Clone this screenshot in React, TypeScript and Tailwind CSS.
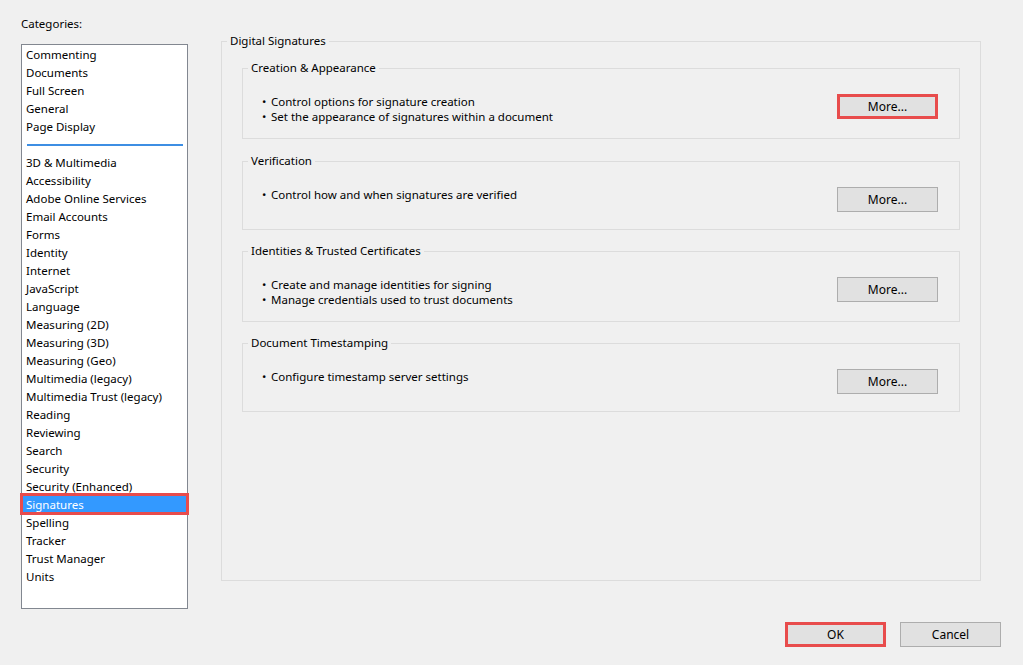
import React from 'react';

const CATEGORIES_TOP = ['Commenting', 'Documents', 'Full Screen', 'General', 'Page Display'];

const CATEGORIES = [
  '3D & Multimedia',
  'Accessibility',
  'Adobe Online Services',
  'Email Accounts',
  'Forms',
  'Identity',
  'Internet',
  'JavaScript',
  'Language',
  'Measuring (2D)',
  'Measuring (3D)',
  'Measuring (Geo)',
  'Multimedia (legacy)',
  'Multimedia Trust (legacy)',
  'Reading',
  'Reviewing',
  'Search',
  'Security',
  'Security (Enhanced)',
  'Signatures',
  'Spelling',
  'Tracker',
  'Trust Manager',
  'Units',
];

const SECTIONS = [
  {
    title: 'Creation & Appearance',
    lines: ['Control options for signature creation', 'Set the appearance of signatures within a document'],
    highlight: true,
  },
  {
    title: 'Verification',
    lines: ['Control how and when signatures are verified'],
  },
  {
    title: 'Identities & Trusted Certificates',
    lines: ['Create and manage identities for signing', 'Manage credentials used to trust documents'],
  },
  {
    title: 'Document Timestamping',
    lines: ['Configure timestamp server settings'],
  },
];

const SELECTED = 'Signatures';

// Win-style push button; `marked` draws the red callout border
const WinButton = ({ label, marked = false }: { label: string; marked?: boolean }) => (
  <button
    className={`w-[101px] h-[25px] shrink-0 bg-[#e1e1e1] text-[12px] leading-[16px] text-black flex items-center justify-center ${
      marked ? 'border-[3px] border-[#e84c4c]' : 'border border-[#adadad]'
    }`}
  >
    {label}
  </button>
);

const ListItem = ({ label }: { label: string }) => {
  const selected = label === SELECTED;
  return (
    <div
      className={`relative h-[18px] leading-[18px] pl-[4px] whitespace-nowrap ${
        selected ? 'bg-[#3399ff] text-white' : 'text-black'
      }`}
    >
      {label}
      {selected && (
        <div className="absolute -top-[3px] -left-[2px] -right-[2px] -bottom-[1px] border-[3px] border-[#e84c4c]" />
      )}
    </div>
  );
};

export default function App() {
  return (
    <div
      className="w-[1023px] h-[665px] bg-[#f0f0f0] flex flex-col text-[11.5px] text-black overflow-hidden"
      style={{ fontFamily: '"Noto Sans", "Open Sans", Arial, sans-serif' }}
    >
      <div className="flex pl-[21px] pt-[16px]">
        {/* Categories list */}
        <div className="w-[167px] shrink-0 flex flex-col">
          <div className="h-[16px] leading-[16px]">Categories:</div>
          <div className="mt-[12px] h-[565px] border border-[#828790] bg-white pt-[1px]">
            {CATEGORIES_TOP.map(c => (
              <ListItem key={c} label={c} />
            ))}
            <div className="h-[18px] flex items-center pl-[5px] pr-[4px]">
              <div className="h-[2px] w-full bg-[#3d8ee3]" />
            </div>
            {CATEGORIES.map(c => (
              <ListItem key={c} label={c} />
            ))}
          </div>
        </div>

        {/* Digital Signatures group */}
        <fieldset className="ml-[33px] mt-[17px] w-[760px] h-[548px] border border-[#dcdcdc]">
          <legend className="ml-[5px] px-[3px] leading-[16px]">Digital Signatures</legend>
          <div className="pt-[11px] px-[20px] flex flex-col gap-[13px]">
            {SECTIONS.map((s, i) => (
              <fieldset key={s.title} className={`border border-[#dcdcdc] ${i === 0 ? 'mb-[1px]' : ''}`}>
                <legend className="ml-[5px] px-[3px] leading-[16px]">{s.title}</legend>
                <div className="pt-[18px] pb-[14px] pl-[19px] pr-[21px] min-h-[60px] flex items-start justify-between">
                  <div className="flex flex-col">
                    {s.lines.map(l => (
                      <div key={l} className="flex leading-[15px]">
                        <span className="w-[9px]">•</span>
                        <span>{l}</span>
                      </div>
                    ))}
                  </div>
                  <WinButton label="More..." marked={s.highlight} />
                </div>
              </fieldset>
            ))}
          </div>
        </fieldset>
      </div>

      {/* Footer */}
      <div className="flex justify-end gap-[14px] pr-[22px] mt-[13px]">
        <WinButton label="OK" marked />
        <WinButton label="Cancel" />
      </div>
    </div>
  );
}
